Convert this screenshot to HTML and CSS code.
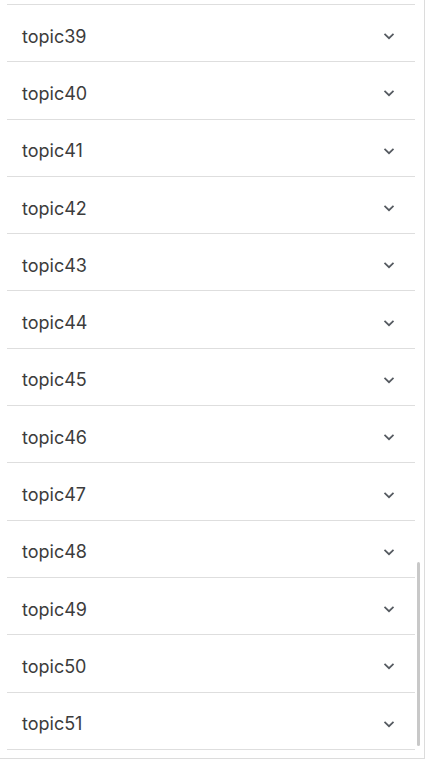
FILE: index.html
```html
<!DOCTYPE html>
<html lang="en">
<head>
    <meta charset="UTF-8">
    <meta name="viewport" content="width=device-width, initial-scale=1.0">
    <title>Topics</title>
    <link rel="stylesheet" href="styles.css">
</head>
<body>
    <div class="frame">
        <div class="topic-list">
            <div class="topic"><span>topic39</span><svg class="chev" viewBox="0 0 12 8"><path d="M1.5 1.8 6 6.2 10.5 1.8"/></svg></div>
            <div class="topic"><span>topic40</span><svg class="chev" viewBox="0 0 12 8"><path d="M1.5 1.8 6 6.2 10.5 1.8"/></svg></div>
            <div class="topic"><span>topic41</span><svg class="chev" viewBox="0 0 12 8"><path d="M1.5 1.8 6 6.2 10.5 1.8"/></svg></div>
            <div class="topic"><span>topic42</span><svg class="chev" viewBox="0 0 12 8"><path d="M1.5 1.8 6 6.2 10.5 1.8"/></svg></div>
            <div class="topic"><span>topic43</span><svg class="chev" viewBox="0 0 12 8"><path d="M1.5 1.8 6 6.2 10.5 1.8"/></svg></div>
            <div class="topic"><span>topic44</span><svg class="chev" viewBox="0 0 12 8"><path d="M1.5 1.8 6 6.2 10.5 1.8"/></svg></div>
            <div class="topic"><span>topic45</span><svg class="chev" viewBox="0 0 12 8"><path d="M1.5 1.8 6 6.2 10.5 1.8"/></svg></div>
            <div class="topic"><span>topic46</span><svg class="chev" viewBox="0 0 12 8"><path d="M1.5 1.8 6 6.2 10.5 1.8"/></svg></div>
            <div class="topic"><span>topic47</span><svg class="chev" viewBox="0 0 12 8"><path d="M1.5 1.8 6 6.2 10.5 1.8"/></svg></div>
            <div class="topic"><span>topic48</span><svg class="chev" viewBox="0 0 12 8"><path d="M1.5 1.8 6 6.2 10.5 1.8"/></svg></div>
            <div class="topic"><span>topic49</span><svg class="chev" viewBox="0 0 12 8"><path d="M1.5 1.8 6 6.2 10.5 1.8"/></svg></div>
            <div class="topic"><span>topic50</span><svg class="chev" viewBox="0 0 12 8"><path d="M1.5 1.8 6 6.2 10.5 1.8"/></svg></div>
            <div class="topic"><span>topic51</span><svg class="chev" viewBox="0 0 12 8"><path d="M1.5 1.8 6 6.2 10.5 1.8"/></svg></div>
        </div>
        <div class="scroll-thumb"></div>
    </div>
</body>
</html>
```
FILE: styles.css
```css
body {
    margin: 0;
    background: #fff;
    font-family: Inter, "Noto Sans", sans-serif;
}
.frame {
    position: relative;
    width: 424px;
    height: 758px;
    border-right: 1px solid #dcdcdc;
    border-bottom: 1px solid #dcdcdc;
    overflow: hidden;
}
.topic-list {
    margin-left: 7px;
    width: 408px;
    padding-top: 4px;
}
.topic {
    box-sizing: border-box;
    height: 57.3px;
    display: flex;
    align-items: center;
    justify-content: space-between;
    padding: 6px 20px 0 15px;
    border-bottom: 1px solid #dedede;
    font-size: 18px;
    color: #3c3c3c;
}
.topic:first-child {
    border-top: 1px solid #dedede;
    height: 58.3px;
}
.chev {
    width: 12px;
    height: 8px;
    fill: none;
    stroke: #555a60;
    stroke-width: 1.7;
}
.scroll-thumb {
    position: absolute;
    left: 417px;
    top: 562px;
    width: 3px;
    height: 184px;
    background: #c8c8c8;
    border-radius: 2px;
}
```
